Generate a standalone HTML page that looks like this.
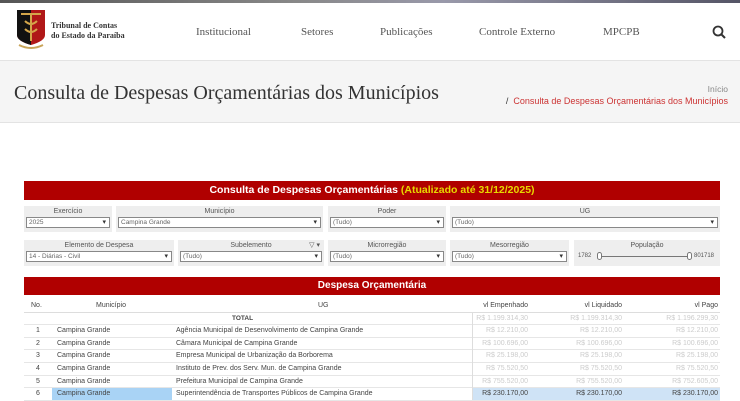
<!DOCTYPE html>
<html><head><meta charset="utf-8"><style>
*{margin:0;padding:0;box-sizing:border-box}
body{width:740px;height:400px;overflow:hidden;background:#fff;font-family:"Liberation Sans",sans-serif;position:relative}
.abs{position:absolute}
.serif{font-family:"Liberation Serif",serif}
.nav{top:26px;font-size:11px;color:#555}
.lbl{font-size:7px;color:#555;text-align:center;background:#eee;height:26px;padding-top:2px}
.sel{position:absolute;left:2px;right:2px;top:11px;height:11px;border:1px solid #888;background:#fff;font-size:6.5px;color:#666;text-align:left;padding-left:2px;line-height:9px}
.sel:after{content:"▾";position:absolute;right:3px;top:0;font-size:7px;color:#333}
.row{position:absolute;left:24px;width:696px;height:12.6px;font-size:7px;color:#444;line-height:12px;border-bottom:1px solid #e6e6e6}
.row span{position:absolute}
.n{color:#ccc;text-align:right}
</style></head><body>
<div class="abs" style="left:0;top:0;width:740px;height:3px;background:linear-gradient(90deg,#555,#888 40%,#99a 60%,#556)"></div>
<svg class="abs" style="left:15px;top:9px" width="32" height="42" viewBox="0 0 32 42">
<path d="M2 1H30V26Q30 32 16 36Q2 32 2 26Z" fill="#b01818"/>
<path d="M2 1H16V36Q2 32 2 26Z" fill="#111"/>
<path d="M6 5H26M16 5V32M10 12Q16 18 22 12M10 20Q16 26 22 20" stroke="#d4a64a" stroke-width="2" fill="none"/>
<path d="M4 36Q16 42 28 36" stroke="#c9a55a" stroke-width="2" fill="none"/>
</svg>
<div class="abs serif" style="left:51px;top:21px;font-size:8px;line-height:10px;color:#333;font-weight:bold">Tribunal de Contas<br>do Estado da Paraíba</div>
<div class="abs nav serif" style="left:196px">Institucional</div>
<div class="abs nav serif" style="left:301px">Setores</div>
<div class="abs nav serif" style="left:380px">Publicações</div>
<div class="abs nav serif" style="left:479px">Controle Externo</div>
<div class="abs nav serif" style="left:603px">MPCPB</div>
<svg class="abs" style="left:712px;top:25px" width="15" height="15"><circle cx="6" cy="6" r="4.5" stroke="#333" stroke-width="1.8" fill="none"/><path d="M9.5 9.5L13 13" stroke="#333" stroke-width="2"/></svg>
<div class="abs" style="left:0;top:60px;width:740px;height:63px;background:#f5f5f5;border-top:1px solid #e3e3e3;border-bottom:1px solid #e3e3e3"></div>
<div class="abs serif" style="left:14px;top:82px;font-size:20px;color:#333">Consulta de Despesas Orçamentárias dos Municípios</div>
<div class="abs" style="right:12px;top:84px;font-size:8.5px;color:#888">Início</div>
<div class="abs" style="right:12px;top:96px;font-size:9px;color:#c33"><span style="color:#333">/</span>&nbsp; Consulta de Despesas Orçamentárias dos Municípios</div>

<div class="abs" style="left:24px;top:181px;width:696px;height:19px;background:#b00000;color:#fff;font-size:10.5px;font-weight:bold;text-align:center;line-height:19px">Consulta de Despesas Orçamentárias <span style="color:#e8d800">(Atualizado até 31/12/2025)</span></div>

<div class="abs lbl" style="left:24px;top:206px;width:88px">Exercício<div class="sel">2025</div></div>
<div class="abs lbl" style="left:116px;top:206px;width:207px">Município<div class="sel">Campina Grande</div></div>
<div class="abs lbl" style="left:328px;top:206px;width:118px">Poder<div class="sel">(Tudo)</div></div>
<div class="abs lbl" style="left:450px;top:206px;width:270px">UG<div class="sel">(Tudo)</div></div>

<div class="abs lbl" style="left:24px;top:240px;width:150px">Elemento de Despesa<div class="sel">14 - Diárias - Civil</div></div>
<div class="abs lbl" style="left:178px;top:240px;width:146px">Subelemento<span style="position:absolute;right:4px;top:1px">▽ ▾</span><div class="sel">(Tudo)</div></div>
<div class="abs lbl" style="left:328px;top:240px;width:118px">Microrregião<div class="sel">(Tudo)</div></div>
<div class="abs lbl" style="left:450px;top:240px;width:119px">Mesorregião<div class="sel">(Tudo)</div></div>
<div class="abs lbl" style="left:574px;top:240px;width:146px">População
<span class="abs" style="left:4px;top:13px;font-size:6px">1782</span>
<div class="abs" style="left:24px;top:16px;width:92px;height:1px;background:#777"></div>
<div class="abs" style="left:23px;top:12px;width:5px;height:8px;border:1px solid #777;border-radius:3px;background:#fff"></div>
<div class="abs" style="left:113px;top:12px;width:5px;height:8px;border:1px solid #777;border-radius:3px;background:#fff"></div>
<span class="abs" style="left:120px;top:13px;font-size:6px">801718</span></div>

<div class="abs" style="left:24px;top:277px;width:696px;height:18px;background:#b00000;color:#fff;font-size:10px;font-weight:bold;text-align:center;line-height:18px">Despesa Orçamentária</div>

<div class="row" style="top:300px;border-bottom:1px solid #ddd"><span style="left:7px">No.</span><span style="left:72px">Município</span><span style="left:294px">UG</span><span style="right:192px">vl Empenhado</span><span style="right:98px">vl Liquidado</span><span style="right:2px">vl Pago</span></div>
<div class="row" style="top:312.6px"><span style="left:208px;font-weight:bold;font-size:6.5px">TOTAL</span><span class="n" style="right:192px">R$ 1.199.314,30</span><span class="n" style="right:98px">R$ 1.199.314,30</span><span class="n" style="right:2px">R$ 1.196.299,30</span></div>
<div class="row" style="top:325.2px"><span style="left:12px">1</span><span style="left:33px">Campina Grande</span><span style="left:152px">Agência Municipal de Desenvolvimento de Campina Grande</span><span class="n" style="right:192px">R$ 12.210,00</span><span class="n" style="right:98px">R$ 12.210,00</span><span class="n" style="right:2px">R$ 12.210,00</span></div>
<div class="row" style="top:337.8px"><span style="left:12px">2</span><span style="left:33px">Campina Grande</span><span style="left:152px">Câmara Municipal de Campina Grande</span><span class="n" style="right:192px">R$ 100.696,00</span><span class="n" style="right:98px">R$ 100.696,00</span><span class="n" style="right:2px">R$ 100.696,00</span></div>
<div class="row" style="top:350.4px"><span style="left:12px">3</span><span style="left:33px">Campina Grande</span><span style="left:152px">Empresa Municipal de Urbanização da Borborema</span><span class="n" style="right:192px">R$ 25.198,00</span><span class="n" style="right:98px">R$ 25.198,00</span><span class="n" style="right:2px">R$ 25.198,00</span></div>
<div class="row" style="top:363px"><span style="left:12px">4</span><span style="left:33px">Campina Grande</span><span style="left:152px">Instituto de Prev. dos Serv. Mun. de Campina Grande</span><span class="n" style="right:192px">R$ 75.520,50</span><span class="n" style="right:98px">R$ 75.520,50</span><span class="n" style="right:2px">R$ 75.520,50</span></div>
<div class="row" style="top:375.6px"><span style="left:12px">5</span><span style="left:33px">Campina Grande</span><span style="left:152px">Prefeitura Municipal de Campina Grande</span><span class="n" style="right:192px">R$ 755.520,00</span><span class="n" style="right:98px">R$ 755.520,00</span><span class="n" style="right:2px">R$ 752.605,00</span></div>
<div class="row" style="top:388.2px"><div class="abs" style="left:28px;top:0;width:120px;height:12px;background:#a9d3f5"></div><div class="abs" style="left:449px;top:0;width:247px;height:12px;background:#cfe3f6"></div><span style="left:12px">6</span><span style="left:33px">Campina Grande</span><span style="left:152px">Superintendência de Transportes Públicos de Campina Grande</span><span style="right:192px">R$ 230.170,00</span><span style="right:98px">R$ 230.170,00</span><span style="right:2px">R$ 230.170,00</span></div>
<div class="abs" style="left:472px;top:312px;width:1px;height:88px;background:#ddd"></div>
</body></html>
